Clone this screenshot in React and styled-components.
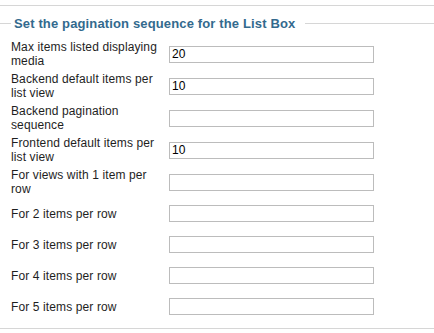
import React from "react";
import styled, { createGlobalStyle } from "styled-components";

const Global = createGlobalStyle`
  html, body { margin: 0; padding: 0; background: #fff; }
  body { font-family: "Liberation Sans", Arial, sans-serif; }
`;

const Page = styled.div`
  padding-top: 5px;
  width: 434px;
`;

const Panel = styled.div`
  border-top: 1px solid #d6d6d6;
  padding-top: 10px;
`;

const Fieldset = styled.fieldset`
  margin: 0;
  padding: 7px 0 6px 11px;
  border: none;
  border-top: 1px solid #d6d6d6;
  border-bottom: 1px solid #d6d6d6;
  min-width: 0;
`;

const Legend = styled.legend`
  padding: 0 10px 0 3px;
  font-size: 13px;
  line-height: 15px;
  font-weight: bold;
  letter-spacing: 0.14px;
  color: #336a8e;
`;

const Grid = styled.div`
  display: grid;
  grid-template-columns: 152px 205px;
  column-gap: 6px;
`;

const Label = styled.label`
  display: flex;
  align-items: center;
  min-height: ${(p) => (p.$tall ? 32 : 31)}px;
  font-size: 12px;
  line-height: 14px;
  letter-spacing: 0.12px;
  color: #1e1e1e;
`;

const Cell = styled.div`
  display: flex;
  align-items: center;
`;

const Input = styled.input`
  box-sizing: border-box;
  width: 205px;
  height: 17px;
  margin: 0;
  padding: 0 2px;
  border: 1px solid #bcbcbc;
  font-family: "Liberation Sans", Arial, sans-serif;
  font-size: 12px;
  color: #000;
  background: #fff;
  outline: none;
`;

const rows = [
  { label: "Max items listed displaying media", value: "20", tall: true },
  { label: "Backend default items per list view", value: "10", tall: true },
  { label: "Backend pagination sequence", value: "", tall: true },
  { label: "Frontend default items per list view", value: "10", tall: true },
  { label: "For views with 1 item per row", value: "", tall: true },
  { label: "For 2 items per row", value: "" },
  { label: "For 3 items per row", value: "" },
  { label: "For 4 items per row", value: "" },
  { label: "For 5 items per row", value: "" },
];

export default function App() {
  return (
    <Page>
      <Global />
      <Panel>
        <Fieldset>
          <Legend>Set the pagination sequence for the List Box</Legend>
          <Grid>
            {rows.map((r, i) => (
              <React.Fragment key={i}>
                <Label $tall={r.tall} htmlFor={`f${i}`}>{r.label}</Label>
                <Cell>
                  <Input id={`f${i}`} type="text" defaultValue={r.value} />
                </Cell>
              </React.Fragment>
            ))}
          </Grid>
        </Fieldset>
      </Panel>
    </Page>
  );
}
